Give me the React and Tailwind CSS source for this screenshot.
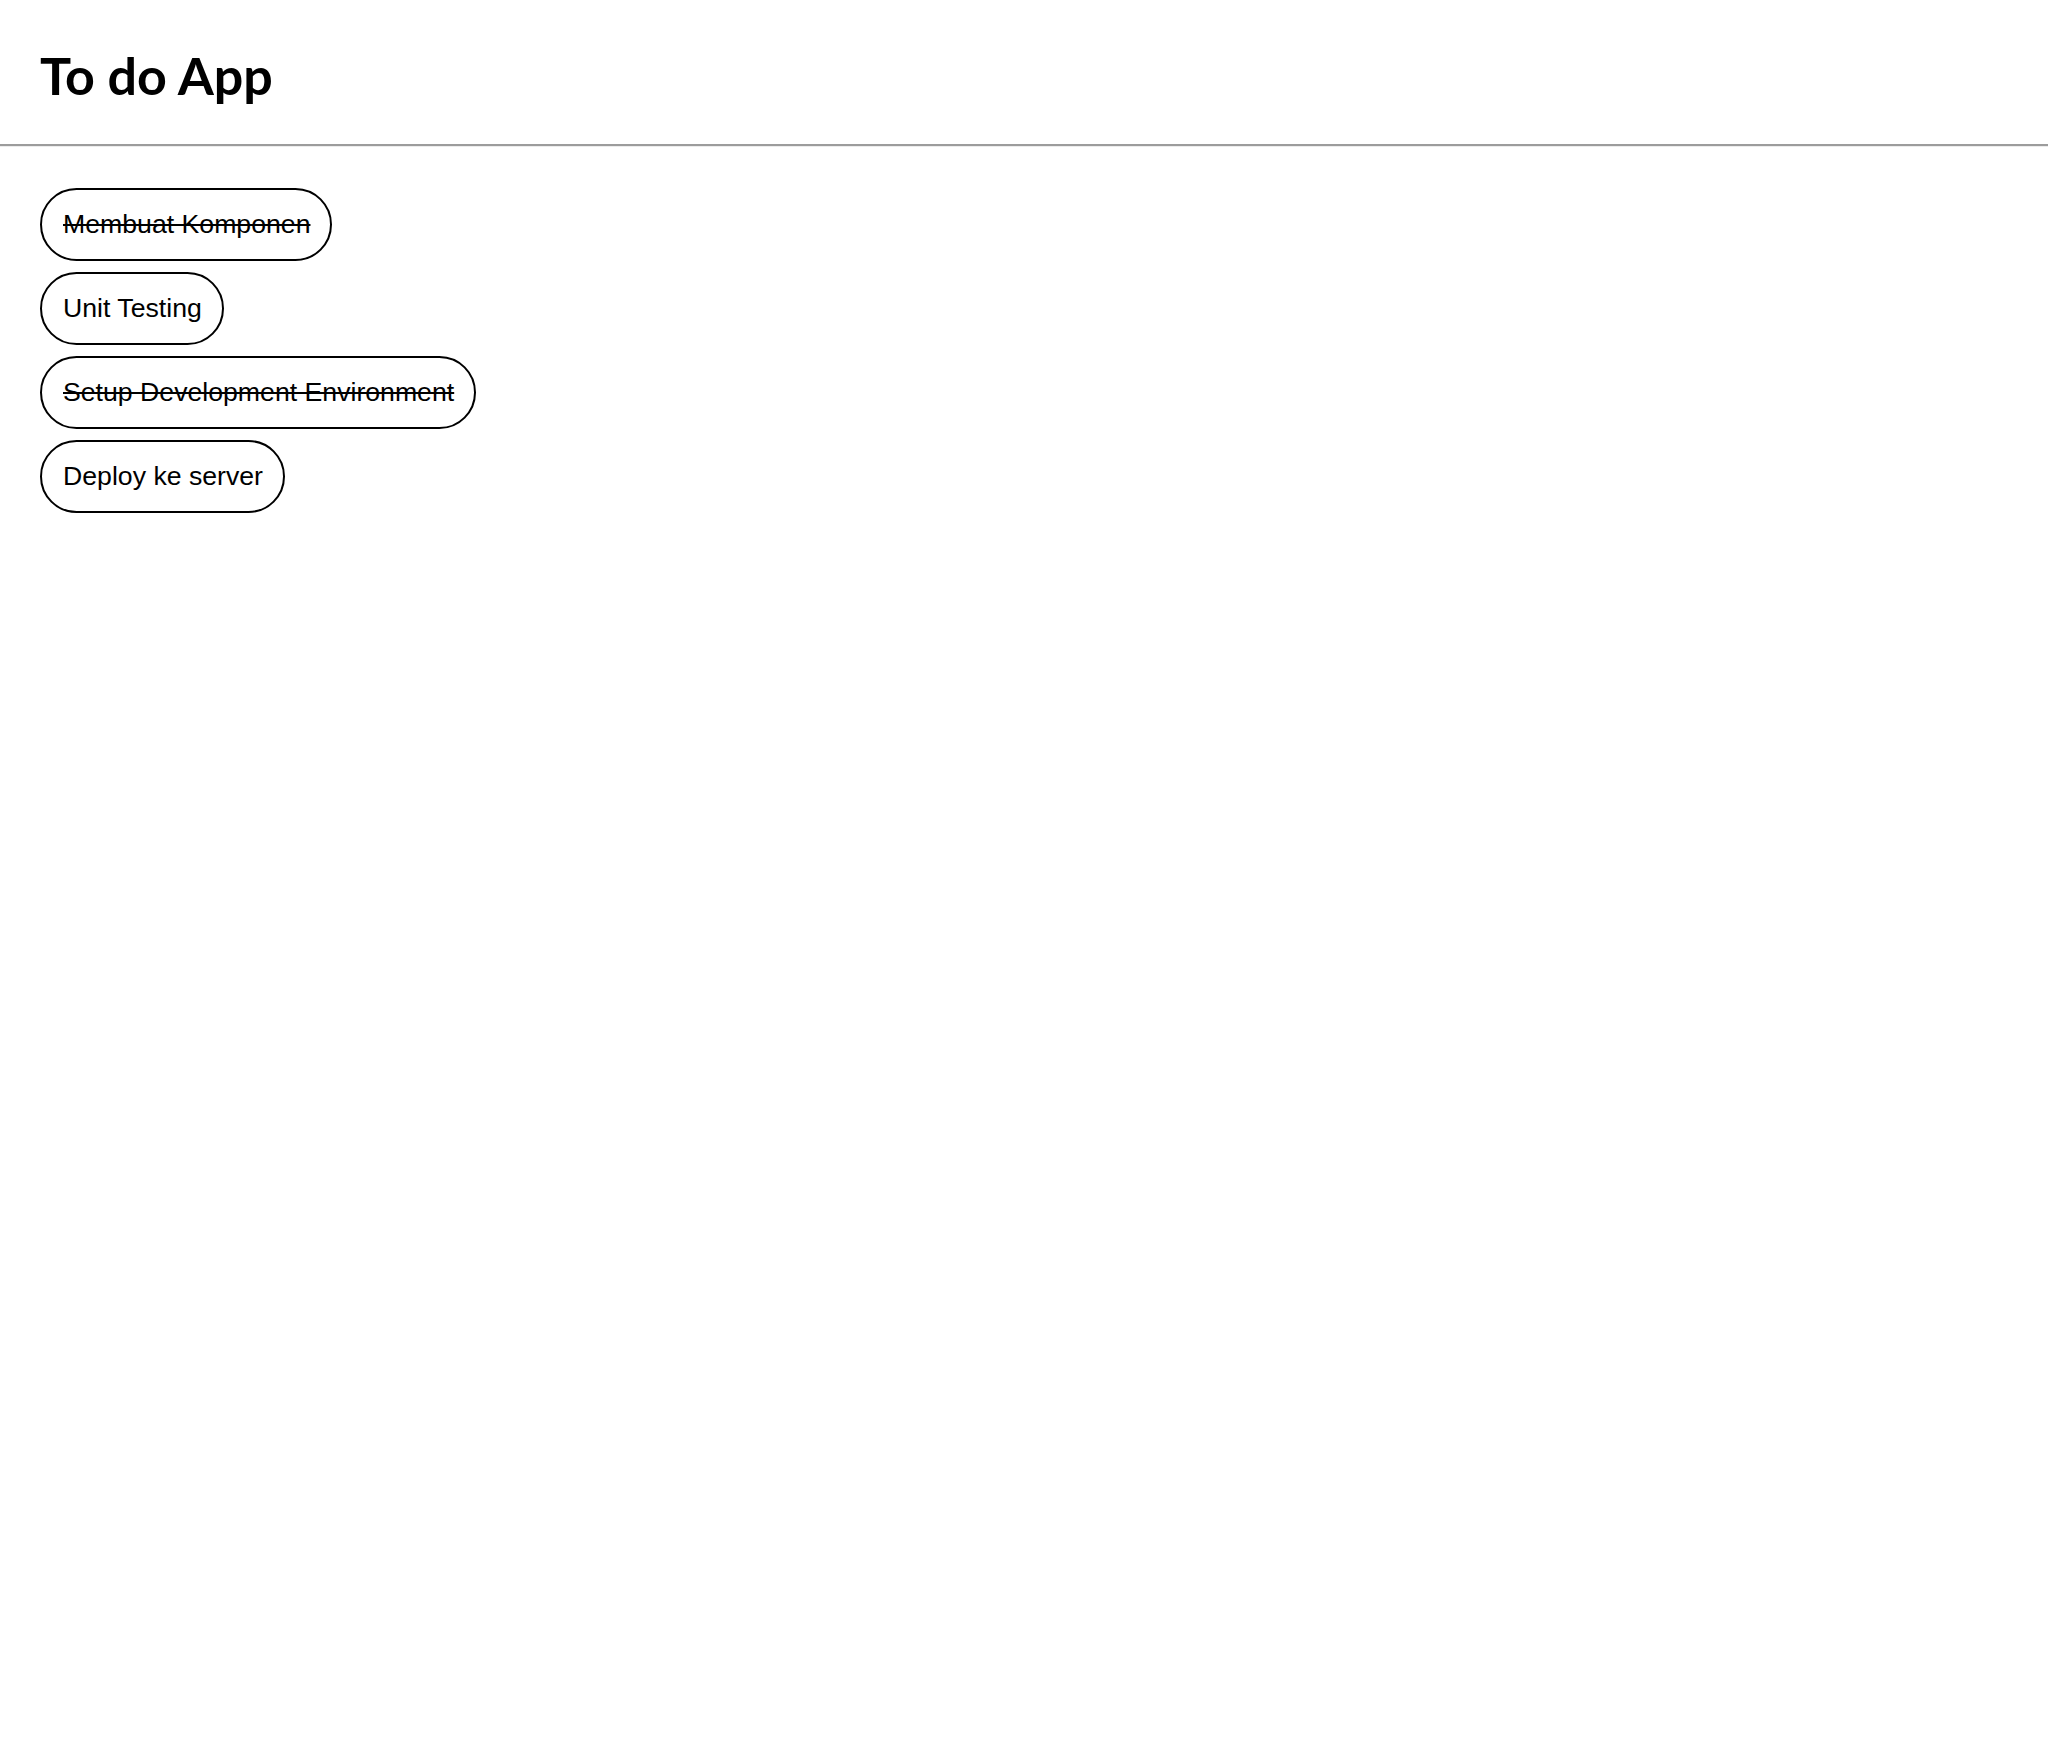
const todos = [
  { id: 1, title: 'Membuat Komponen', completed: true },
  { id: 2, title: 'Unit Testing', completed: false },
  { id: 3, title: 'Setup Development Environment', completed: true },
  { id: 4, title: 'Deploy ke server', completed: false },
];

const TodoItem = ({ todo }) => (
  <div className="flex h-[73px] items-center rounded-full border-2 border-black pl-[21px] pr-[20px]">
    <span
      className={`text-[26.67px] leading-none text-black ${
        todo.completed ? 'line-through' : ''
      }`}
    >
      {todo.title}
    </span>
  </div>
);

export default function App() {
  return (
    <div className="min-h-screen bg-white font-['Liberation_Sans',Arial,sans-serif]">
      {/* Header */}
      <header className="flex h-[144px] items-center px-[40px] pt-[6px]">
        <h1 className="font-['Lato','Open_Sans',sans-serif] text-[52px] font-bold leading-none text-black">
          To do App
        </h1>
      </header>
      <div className="h-[3px] border-t-2 border-b border-t-[#9c9c9c] border-b-[#ececec]" />

      {/* List */}
      <div className="flex flex-col items-start gap-[11px] px-[40px] pt-[41px]">
        {todos.map((todo) => (
          <TodoItem key={todo.id} todo={todo} />
        ))}
      </div>
    </div>
  );
}
